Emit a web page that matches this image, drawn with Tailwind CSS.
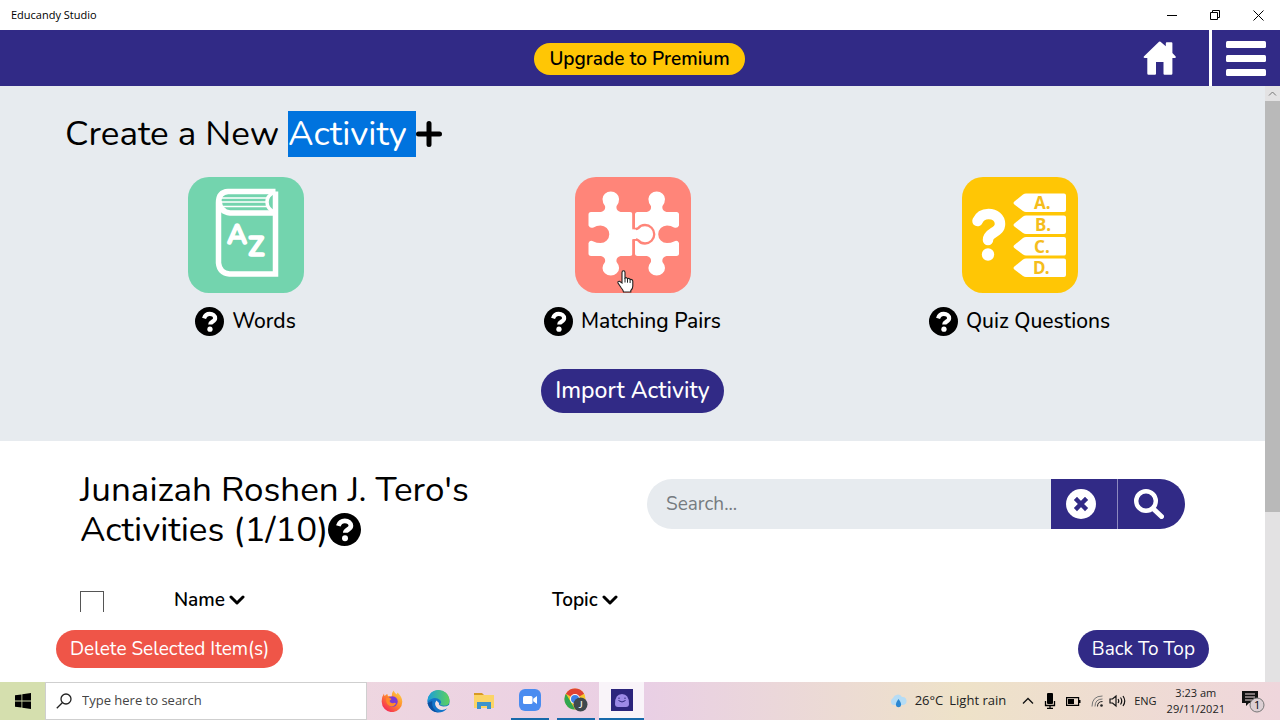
<!DOCTYPE html>
<html lang="en">

<head>
  <meta charset="UTF-8">
  <meta name="viewport" content="width=device-width, initial-scale=1.0">
  <title>Educandy Studio</title>
  <script src="https://cdn.jsdelivr.net/npm/@tailwindcss/browser@4"></script>
</head>

<body class="h-screen flex flex-col overflow-hidden bg-white text-black font-['Nunito','Noto_Sans',sans-serif]">

  <!-- shared icons -->
  <svg class="hidden">
    <symbol id="help" viewBox="0 0 32 32">
      <circle cx="16" cy="16" r="16" fill="#000" />
      <path d="M10 12.500C11 9.300 13.300 7.600 16.300 7.600c3.400 0 5.900 2 5.900 4.800 0 3.800-5.400 3.600-5.400 6.800" fill="none" stroke="#fff" stroke-width="4.600" />
      <circle cx="16.500" cy="24.500" r="2.900" fill="#fff" />
    </symbol>
    <symbol id="chevron" viewBox="0 0 16 12">
      <path d="M2 3l6 6 6-6" fill="none" stroke="#000" stroke-width="3" stroke-linecap="round" stroke-linejoin="round" />
    </symbol>
  </svg>

  <!-- window title bar -->
  <div class="h-[30px] shrink-0 flex items-center justify-between pl-[11px] pr-4 font-['Open_Sans',sans-serif]">
    <span class="text-[11px]">Educandy Studio</span>
    <div class="flex items-center gap-[33px]">
      <button aria-label="Minimize"><svg class="w-[10px] h-[10px]" viewBox="0 0 10 10"><path d="M0 5.500h10" stroke="#000" /></svg></button>
      <button aria-label="Restore"><svg class="w-[10px] h-[10px]" viewBox="0 0 10 10" fill="none" stroke="#000"><path d="M.5 2.500h7v7h-7zM2.500 2.500v-2h7v7h-2" /></svg></button>
      <button aria-label="Close"><svg class="w-[11px] h-[11px]" viewBox="0 0 11 11" stroke="#000"><path d="M.5.5l10 10M10.500.5l-10 10" /></svg></button>
    </div>
  </div>

  <!-- app header -->
  <header class="h-14 shrink-0 flex bg-[#312a86]">
    <div class="flex-1 flex items-center justify-center pl-[136px] pt-[2px]">
      <button class="h-8 px-[15px] rounded-full bg-[#ffc605] text-[19px] leading-8 font-semibold">Upgrade to Premium</button>
    </div>
    <div class="flex">
      <a href="#" aria-label="Home" class="flex items-center pr-8">
        <svg class="w-[34px] h-[34px]" viewBox="0 0 34 34" fill="#fff">
          <path d="M16 .8 .8 15.500q-.7 1.300.8 1.500h2.700v15.500q0 1.200 1.200 1.200H12q1 0 1-1V21h7.500v11.700q0 1 1 1h6.700q1.200 0 1.200-1.200V17h2.500q1.600-.2.800-1.500L29.400 12V2.300q0-1-1-1h-4.600q-1 0-1 1v3L17.500.8q-.7-.6-1.500 0z" />
        </svg>
      </a>
      <button aria-label="Menu" class="w-[71px] border-l-3 border-white flex items-center justify-center">
        <svg class="w-10 h-[35px]" viewBox="0 0 40 35" fill="#fff">
          <rect y="0" width="40" height="7" rx="1.500" /><rect y="14" width="40" height="7" rx="1.500" /><rect y="28" width="40" height="7" rx="1.500" />
        </svg>
      </button>
    </div>
  </header>

  <div class="flex-1 min-h-0 flex">
    <main class="flex-1 min-w-0 flex flex-col">
      <div class="flex-1 min-h-0 overflow-hidden">

        <section class="bg-[#e7ebef] px-[52px] pt-[25px] pb-7">
          <h1 class="flex items-center pl-[13px] text-[35px] leading-[46px] whitespace-pre"><span>Create a New </span><span class="bg-[#0073de] text-white">Activity </span><svg class="w-[26px] h-[26px]" viewBox="0 0 26 26"><path d="M13 2.500v21M2.500 13h21" stroke="#000" stroke-width="5" stroke-linecap="round" /></svg></h1>

          <div class="grid grid-cols-3 mt-5">
            <div class="flex flex-col items-center">
              <button aria-label="Words" class="w-[116px] h-[116px]">
                <svg class="w-full h-full" viewBox="0 0 116 116">
                  <rect width="116" height="116" rx="21" fill="#73d4ae" />
                  <g fill="none" stroke="#fff" stroke-width="5.500">
                    <path d="M87.500 14.500H40Q30.500 15 30.500 26v60q1 10 11 11h46V14.500" />
                    <path d="M31 24q1 11 11 12h46" />
                    <path d="M33 21h48M33 25h47M35 29.500h46" stroke-width="1.500" />
                    <path d="M86 15.500q-7 3-7 9.500t7 10" stroke-width="3.500" />
                  </g>
                  <g fill="#fff" stroke="#fff" stroke-width="1.500" stroke-linejoin="round" font-family="Nunito, Lato, sans-serif" font-weight="bold">
                    <text x="39" y="67" font-size="27">A</text>
                    <text x="60" y="79" font-size="27">Z</text>
                  </g>
                </svg>
              </button>
              <div class="flex items-center gap-2 mt-3 text-[21px] leading-8 font-medium"><svg class="w-[29px] h-[29px]"><use href="#help" /></svg>Words</div>
            </div>

            <div class="flex flex-col items-center">
              <button aria-label="Matching Pairs" class="relative w-[116px] h-[116px]">
                <svg class="w-full h-full" viewBox="0 0 116 116">
                  <rect width="116" height="116" rx="21" fill="#ff8579" />
                  <g fill="#fff">
                    <path id="piece" d="M16 35H26q5-1.500 4-6-2.500-3-2.500-7a8.300 7.500 0 0 1 16.600 0q0 4-2.500 7-1 4.500 4 6h9.400q2.500 0 2.500 2.500v39q0 2.500-2.500 2.500H45.600q-5 1.500-4 6 2.500 3 2.500 6a8.300 7.500 0 0 1-16.600 0q0-3 2.500-6 1-4.500-4-6H16q-2.500 0-2.500-2.500V66q1.500-3.500 5-1.500 3 1.500 7 1.500a8.800 8.800 0 0 0 0-17.600q-4 0-7 2-3.500 1.500-5-2V37.500Q13.500 35 16 35z" />
                    <use href="#piece" transform="matrix(-1 0 0 1 117.500 0)" />
                  </g>
                  <path d="M58.500 34v17q2 2 5 0 2-3 6.500-3a9.200 9.200 0 0 1 0 18.500q-4.500 0-6.500-3-3-2-5 0V80" fill="#fff" stroke="#ff8579" stroke-width="2.300" />
                  <path d="M55 52.500h6v9.500h-6z" fill="#fff" />
                </svg>
                <!-- hand pointer -->
                <svg class="absolute left-[42px] top-[93px] w-[17px] h-[23px]" viewBox="0 0 17 23">
                  <path d="M5 13V2.500q0-1.700 1.500-1.700T8 2.500V8q1.700-1 2.500.7 2-.9 2.600.8 2.700-.5 2.700 2V16q0 3-2 4.500V22H6.500q-.3-2-2.500-4.500L1 13q-.5-2 1.500-1.700z" fill="#fff" stroke="#222" stroke-width="1.100" />
                  <path d="M8 8v4.500M10.500 8.700v4M13.100 9.500v3.500" stroke="#222" />
                </svg>
              </button>
              <div class="flex items-center gap-2 mt-3 text-[21px] leading-8 font-medium"><svg class="w-[29px] h-[29px]"><use href="#help" /></svg>Matching Pairs</div>
            </div>

            <div class="flex flex-col items-center">
              <button aria-label="Quiz Questions" class="w-[116px] h-[116px]">
                <svg class="w-full h-full" viewBox="0 0 116 116">
                  <rect width="116" height="116" rx="21" fill="#ffc605" />
                  <path d="M15.500 44c2-4.500 6-7 11-7 6.500 0 11.500 4 11.500 10 0 9-12 8-12 16" fill="none" stroke="#fff" stroke-width="10.500" stroke-linecap="round" />
                  <circle cx="26" cy="77.500" r="6.200" fill="#fff" />
                  <g fill="#fff">
                    <path id="tag" d="M53 24 61 17.500q1.500-1 3-1H102q2 0 2 2v14.500q0 2-2 2H64q-1.500 0-3-1L53 28q-3-2 0-4z" />
                    <use href="#tag" y="22" /><use href="#tag" y="43.500" /><use href="#tag" y="65" />
                  </g>
                  <g fill="#f5bd1c" font-family="'Noto Sans', sans-serif" font-weight="bold" font-size="17">
                    <text x="72" y="32">A.</text><text x="73" y="54">B.</text><text x="72" y="75.500">C.</text><text x="71" y="97">D.</text>
                  </g>
                </svg>
              </button>
              <div class="flex items-center gap-2 mt-3 text-[21px] leading-8 font-medium"><svg class="w-[29px] h-[29px]"><use href="#help" /></svg>Quiz Questions</div>
            </div>
          </div>

          <div class="flex justify-center mt-8">
            <button class="h-11 px-[14px] rounded-full bg-[#312a86] text-white text-[23px] leading-[44px] font-medium">Import Activity</button>
          </div>
        </section>

        <section class="px-20 pt-[29px]">
          <div class="flex items-start justify-between">
            <h2 class="w-[440px] text-[35px] leading-10">Junaizah Roshen J. Tero's Activities (1/10)<svg class="inline-block align-[-5px] w-[33px] h-[33px]"><use href="#help" /></svg></h2>
            <form class="flex w-[538px] h-[50px] mt-[9px] rounded-full overflow-hidden">
              <input type="text" aria-label="Search" placeholder="Search..." class="flex-1 min-w-0 bg-[#e7ebef] pl-[19px] text-[19px] placeholder:text-[#767b80] outline-none">
              <button type="button" aria-label="Clear" class="w-[67px] bg-[#312a86] flex items-center justify-center pr-[6px] border-r border-[#8d89bf]">
                <svg class="w-[30px] h-[30px]" viewBox="0 0 30 30"><circle cx="15" cy="15" r="15" fill="#fff" /><path d="M11 11l8 8M19 11l-8 8" stroke="#312a86" stroke-width="4.500" stroke-linecap="square" /></svg>
              </button>
              <button type="button" aria-label="Search" class="w-[67px] bg-[#312a86] flex items-center justify-center pr-[6px]">
                <svg class="w-[30px] h-[30px]" viewBox="0 0 30 30" fill="none" stroke="#fff"><circle cx="12" cy="12" r="9.800" stroke-width="4.400" /><path d="M19.500 20l8 7.500" stroke-width="5" stroke-linecap="round" /></svg>
              </button>
            </form>
          </div>

          <table class="w-full mt-10 text-[19px] leading-5">
            <thead>
              <tr class="text-left align-top">
                <th class="w-[94px] pt-px"><input type="checkbox" aria-label="Select all" class="block appearance-none w-6 h-6 border border-[#555]"></th>
                <th class="w-[378px] font-semibold"><button class="flex items-center gap-1">Name<svg class="w-4 h-3"><use href="#chevron" /></svg></button></th>
                <th class="font-semibold"><button class="flex items-center gap-1">Topic<svg class="w-4 h-3"><use href="#chevron" /></svg></button></th>
              </tr>
            </thead>
          </table>
        </section>
      </div>

      <div class="h-[70px] shrink-0 flex items-center justify-between px-14 pt-1 text-[19px] text-white">
        <button class="h-[38px] px-[14px] rounded-full bg-[#ef5548]">Delete Selected Item(s)</button>
        <button class="h-[38px] px-[14px] rounded-full bg-[#312a86]">Back To Top</button>
      </div>
    </main>

    <!-- scrollbar -->
    <div class="w-[15px] flex flex-col bg-[#e3e2e3]">
      <svg class="w-[15px] h-[15px] shrink-0" viewBox="0 0 15 15"><path d="M4 9.500l3.500-3.500L11 9.500" fill="none" stroke="#777" /></svg>
      <div class="h-[69%] bg-[#b9b9b9]"></div>
    </div>
  </div>

  <!-- taskbar -->
  <footer class="h-[38px] shrink-0 flex items-stretch bg-linear-to-r from-[#f3dfdb] via-[#eacfe4] to-[#efd9d5] font-['Open_Sans',sans-serif] text-[#222]">
    <button aria-label="Start" class="w-[45px] bg-[#d5dfae] flex items-center justify-center">
      <svg class="w-4 h-4" viewBox="0 0 16 16"><path d="M0 2.300 6.500 1.400V7.600H0zM7.300 1.300 16 0V7.600H7.300zM0 8.400H6.500V14.600L0 13.700zM7.300 8.400H16V16L7.300 14.700z" /></svg>
    </button>
    <label class="w-[322px] flex items-center bg-white border border-[#cfcfcf] pl-[10px] gap-[10px]">
      <svg class="w-4 h-4" viewBox="0 0 16 16" fill="none" stroke="#222" stroke-width="1.300"><circle cx="10" cy="6" r="5" /><path d="M6.300 9.700.8 15.200" /></svg>
      <input type="text" aria-label="Type here to search" placeholder="Type here to search" class="flex-1 min-w-0 text-[13px] placeholder:text-[#444] outline-none">
    </label>

    <div class="flex pl-[2px]">
      <button aria-label="Firefox" class="w-[46px] flex items-center justify-center">
        <svg class="w-[22px] h-[22px]" viewBox="0 0 22 22">
          <defs><linearGradient id="fox" x1="1" y1="0" x2="0.200" y2="1"><stop offset="0" stop-color="#ffe14d" /><stop offset=".5" stop-color="#ff8a2b" /><stop offset="1" stop-color="#f5215c" /></linearGradient></defs>
          <path d="M12.500.5q1 2.500 3.500 4 0-1.500.5-2 4.800 4.500 4.800 9.300a10.300 10.300 0 0 1-20.600 0Q.5 7 3 3.500q0 2 .8 2.500Q5 4.500 6.300 4L7 6.300q2-.6 3.700.2 0-4 1.800-6z" fill="url(#fox)" />
          <circle cx="11.500" cy="11.500" r="5.200" fill="#7b3bd5" />
          <path d="M5 8.500q3-1.500 5.500.5l-2 2q1 2.500 3.500 2.200 2-1 3 0-1 3-4.500 3.300-5.500-.5-5.500-8z" fill="#ff8b2a" />
        </svg>
      </button>
      <button aria-label="Edge" class="w-[46px] flex items-center justify-center">
        <svg class="w-[23px] h-[23px]" viewBox="0 0 22 22">
          <defs><linearGradient id="edge"><stop offset="0" stop-color="#1a9ddb" /><stop offset="1" stop-color="#5ed25b" /></linearGradient></defs>
          <circle cx="11" cy="11" r="10.500" fill="#1374c9" />
          <path d="M.5 11A10.500 10.500 0 0 1 21.500 10q0 5-5 5-4 0-4-1.500 2-1.500 0-4Q7 5 .5 11z" fill="url(#edge)" />
          <path d="M9 10q-3 4 1.500 8 4 2.500 9-.5 2-1.500 2-3.500-3 2-6 1.800-5-.8-4-3.300z" fill="#f1dfe4" />
          <path d="M5 10.500q-1 8 6 11-8 0-10.500-9z" fill="#0c4f9f" />
        </svg>
      </button>
      <button aria-label="File Explorer" class="w-[46px] flex items-center justify-center">
        <svg class="w-[22px] h-[20px]" viewBox="0 0 22 20"><path d="M1 2h8l2 2H1z" fill="#d79a24" /><path d="M1 4h20v13H1z" fill="#fbd465" /><path d="M4 18v-7h14v7h-4v-3H8v3z" fill="#3c93cc" /></svg>
      </button>
      <button aria-label="Zoom" class="w-[38px] mx-1 flex items-center justify-center border-b-2 border-[#1769aa]">
        <svg class="w-[22px] h-[22px]" viewBox="0 0 22 22"><rect width="22" height="22" rx="6" fill="#4a8cf0" /><rect x="4" y="7" width="9.500" height="8" rx="1.500" fill="#fff" /><path d="M14.200 9.700 18 7v8l-3.800-2.700z" fill="#fff" /></svg>
      </button>
      <button aria-label="Chrome" class="w-[38px] mx-1 flex items-center justify-center border-b-2 border-[#1769aa]">
        <svg class="w-[24px] h-[24px]" viewBox="0 0 24 24">
          <circle cx="11" cy="11" r="10.500" fill="#f6c62d" />
          <path d="M1.900 5.700 6.500 13.500 11 21.500A10.500 10.500 0 0 1 1.900 5.700z" fill="#31a650" /><path d="M1.900 5.700A10.500 10.500 0 0 1 20.100 5.700L11 11z" fill="#e04334" />
          <circle cx="11" cy="11" r="5" fill="#fff" /><circle cx="11" cy="11" r="4" fill="#3f7fe8" />
          <circle cx="16.500" cy="16.500" r="7" fill="#3f484d" /><text x="16.500" y="20" text-anchor="middle" font-size="10" font-family="Lato, sans-serif" fill="#fff">J</text>
        </svg>
      </button>
      <button aria-label="Educandy Studio" class="w-[45px] flex items-center justify-center bg-[#f9f4f9] border-b-2 border-[#1769aa]">
        <svg class="w-[22px] h-[22px]" viewBox="0 0 22 22"><path d="M0 0h22v22H0z" fill="#2c257c" /><path d="M4 15q0-10 7-10t7 10q0 3-3 3H7q-3 0-3-3z" fill="#9c8ae6" /><path d="M8 8.500v1.500M14 8.500v1.500M7.500 11.500q3.500 3 7 0" stroke="#2c257c" fill="none" /></svg>
      </button>
    </div>

    <div class="flex-1 flex items-center justify-end pr-[15px] text-[13px] bg-linear-to-r from-[#e9cfe5] via-[#eee2c8] to-[#efd6dc]">
      <svg class="w-[18px] h-4" viewBox="0 0 18 16"><path d="M4 12a4 4 0 0 1 0-7 5 5 0 0 1 9-1 4 4 0 0 1 1 8z" fill="#b5dcf5" /><path d="M9.500 6q4 5 2 7.500-2 1.500-4 0-2-2.500 2-7.500z" fill="#2b87d1" /></svg>
      <span class="ml-2">26°C</span>
      <span class="ml-[6px]">Light rain</span>
      <svg class="ml-4 w-3 h-2" viewBox="0 0 12 8"><path d="M1 6.500l5-5 5 5" fill="none" stroke="#111" stroke-width="1.300" /></svg>
      <svg class="ml-[10px] w-3 h-4" viewBox="0 0 12 16"><rect x="3" width="6" height="11" rx="1" /><path d="M1.500 8v4.500h9V8M6 12v3M3 15.300h6" fill="none" stroke="#000" stroke-width="1.300" /></svg>
      <svg class="ml-[10px] w-[15px] h-[9px]" viewBox="0 0 15 9"><path d="M.6.600h12v7.800H.6z" fill="none" stroke="#000" stroke-width="1.200" /><path d="M2 2h6v5H2zM13 3h1.500v3H13z" /></svg>
      <svg class="ml-[10px] w-3 h-3" viewBox="0 0 12 12" fill="none" stroke="#777"><path d="M1 11.500Q1 1 11.500 1M4 11.500Q4 4 11.500 4" /><path d="M6.500 11.500q0-5 5-5" stroke="#222" /><circle cx="10.500" cy="10.500" r="1.300" fill="#222" stroke="none" /></svg>
      <svg class="ml-[6px] w-[17px] h-[14px]" viewBox="0 0 17 14" fill="none" stroke="#111" stroke-width="1.200"><path d="M1 5h2.500L7 2v10L3.500 9H1zM9 5q1.500 2 0 4M11.500 3.500q2.500 3.500 0 7M14 2q3.500 5 0 10" /></svg>
      <span class="ml-2 text-[11px]">ENG</span>
      <div class="ml-[10px] text-center text-[11px] leading-4"><div>3:23 am</div><div>29/11/2021</div></div>
      <svg class="ml-4 w-6 h-6" viewBox="0 0 24 24"><path d="M1 2h16v12H8l-3 3v-3H1z" fill="#111" /><path d="M4 5h10M4 8h10M4 11h7" stroke="#eed9dc" /><circle cx="16" cy="16" r="7" fill="#dccfd3" stroke="#777" /><text x="13" y="20" font-size="11">1</text></svg>
    </div>
  </footer>
</body>

</html>
